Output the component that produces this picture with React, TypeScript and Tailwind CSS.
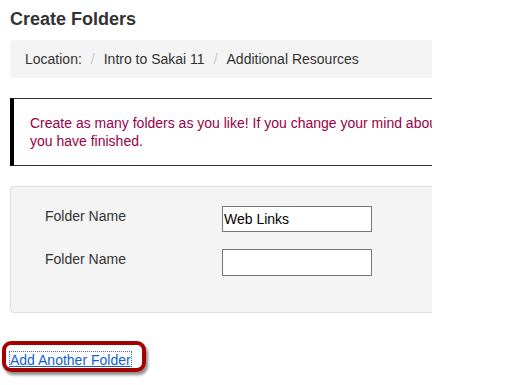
import React from "react";

// Create Folders screen (Sakai resources) — cropped at the right edge like the screenshot

type FolderRow = {
    label: string;
    value: string;
    height: string;
};

const rows: FolderRow[] = [
    { label: "Folder Name", value: "Web Links", height: "h-[26px]" },
    { label: "Folder Name", value: "", height: "h-[27px]" },
];

function Crumbs() {
    return (
        <div className="flex h-[38px] w-[600px] items-center rounded-[4px] bg-[#f4f4f4] pl-[15px] text-[14px] text-[#333]">
            <span>Location:</span>
            <span className="px-[9px] text-[#c8c8c8]">/</span>
            <span>Intro to Sakai 11</span>
            <span className="px-[9px] text-[#c8c8c8]">/</span>
            <span>Additional Resources</span>
        </div>
    );
}

export default function App() {
    return (
        <div
            className="relative h-[385px] w-[532px] overflow-hidden bg-white"
            style={{ fontFamily: '"Liberation Sans", Arial, sans-serif' }}
        >
            <div className="w-[432px] overflow-hidden pl-[10px]">
                <h1 className="pt-[9px] text-[18px] font-bold leading-[20px] text-[#333]">Create Folders</h1>

                <div className="mt-[11px]">
                    <Crumbs />
                </div>

                <div className="mt-[20px] w-[700px] whitespace-nowrap border-y border-l-4 border-y-[#333] border-l-black py-[15px] pl-[16px] text-[14px] leading-[18px] text-[#990047]">
                    Create as many folders as you like! If you change your mind about the number of folders, you can remove them before
                    <br />
                    you have finished.
                </div>

                <div className="mt-[20px] h-[127px] w-[600px] rounded-[4px] border border-[#dedede] bg-[#f4f4f4] pt-[19px]">
                    <div className="flex flex-col gap-[17px]">
                        {rows.map((r, i) => (
                            <div key={i} className="flex items-start">
                                <label className="w-[211px] shrink-0 pl-[34px] pt-[2px] text-[14px] leading-[16px] text-[#333]">
                                    {r.label}
                                </label>
                                <input
                                    readOnly
                                    value={r.value}
                                    className={`${r.height} w-[150px] border border-[#767676] bg-white px-[1px] text-[14px] text-black outline-none`}
                                />
                            </div>
                        ))}
                    </div>
                </div>

                <div className="mt-[35px]">
                    <a
                        href="#"
                        className="text-[14px] leading-[16px] text-[#0f5fd6] underline outline-1 outline-dotted outline-[#3a6fd0]"
                    >
                        Add Another Folder
                    </a>
                </div>
            </div>

            {/* callout drawn over the link */}
            <div className="pointer-events-none absolute left-[2px] top-[341px] h-[31px] w-[144px] rounded-[9px] border-4 border-[#a30000] shadow-[2px_3px_3px_rgba(0,0,0,0.45)]" />
        </div>
    );
}
